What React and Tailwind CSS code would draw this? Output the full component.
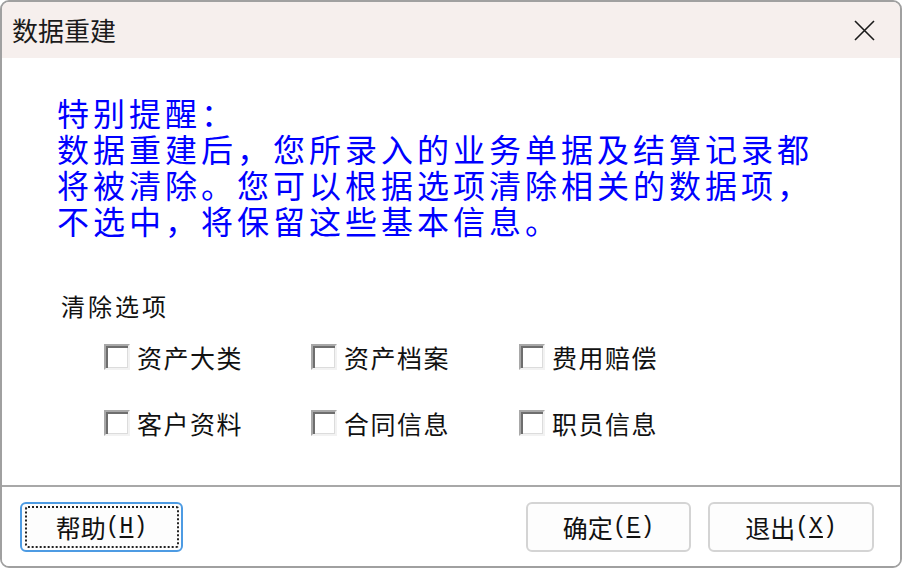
import React from 'react';

const cjk = "font-['Noto_Sans_CJK_SC',sans-serif]";

const options = [
  ['资产大类', '资产档案', '费用赔偿'],
  ['客户资料', '合同信息', '职员信息'],
];

const notice = [
  '特别提醒：',
  '数据重建后，您所录入的业务单据及结算记录都',
  '将被清除。您可以根据选项清除相关的数据项，',
  '不选中，将保留这些基本信息。',
];

const CheckBox = ({ label }) => (
  <label className="flex items-center gap-[7px]">
    <span className="w-[26px] h-[26px] bg-white border-t-[2px] border-l-[2px] border-t-[#a8a8a8] border-l-[#a8a8a8] border-b-[2px] border-r-[2px] border-b-[#f2f2f2] border-r-[#f2f2f2] shadow-[inset_2px_2px_0_#6e6e6e,inset_-1px_-1px_0_#dcdcdc]" />
    <span className={`${cjk} text-[25px] leading-[30px] tracking-[1.5px] text-[#111]`}>{label}</span>
  </label>
);

const Btn = ({ text, hot, focused, className }) => (
  <button
    className={`h-[50px] flex items-center justify-center rounded-[6px] bg-[#fdfdfd] ${
      focused ? 'border-2 border-[#4d9be3]' : 'border-2 border-[#d4d4d4]'
    } ${className}`}
  >
    <span
      className={`flex items-center justify-center ${
        focused ? 'w-[154px] h-[42px] border-2 border-dotted border-[#222] rounded-[3px]' : ''
      }`}
    >
      <span className={`${cjk} text-[25px] leading-none text-[#111]`}>{text}</span>
      <span className="font-['Liberation_Mono',monospace] text-[23px] leading-none text-[#111]">
        (<span className="underline underline-offset-[3px]">{hot}</span>)
      </span>
    </span>
  </button>
);

export default function App() {
  return (
    <div className="w-[902px] h-[569px] bg-white">
      <div className="h-[568px] flex flex-col border-2 border-[#a0a0a0] rounded-[9px] overflow-hidden">
        <div className="h-[56px] bg-[#f6efed] flex items-center justify-between pl-[10px] pr-[25px]">
          <span className={`${cjk} text-[26px] leading-none text-[#1a1a1a]`}>数据重建</span>
          <svg width="21" height="21" viewBox="0 0 21 21">
            <path d="M1 1 L20 20 M20 1 L1 20" stroke="#1a1a1a" strokeWidth="1.6" fill="none" />
          </svg>
        </div>

        <div className="flex-1 bg-white pt-[36px] pl-[55px]">
          <p className={`${cjk} text-[32px] leading-[36px] tracking-[4px] text-[#0000ff] whitespace-nowrap`}>
            {notice.map((line, i) => (
              <React.Fragment key={line}>
                {line}
                {i < notice.length - 1 && <br />}
              </React.Fragment>
            ))}
          </p>

          <div className={`${cjk} mt-[54px] ml-[4px] text-[24px] leading-[28px] tracking-[3px] text-[#111]`}>
            清除选项
          </div>

          <div className="mt-[22px] ml-[47px] grid grid-cols-[207px_208px_207px] gap-y-[36px]">
            {options.flat().map((o) => (
              <CheckBox key={o} label={o} />
            ))}
          </div>
        </div>

        <div className="h-[2px] bg-[#a8a8a8]" />

        <div className="h-[79px] bg-white flex items-start pt-[15px] pl-[18px] pr-[26px]">
          <Btn text="帮助" hot="H" focused className="w-[163px]" />
          <div className="flex-1" />
          <Btn text="确定" hot="E" className="w-[165px]" />
          <Btn text="退出" hot="X" className="w-[166px] ml-[17px]" />
        </div>
      </div>
    </div>
  );
}
